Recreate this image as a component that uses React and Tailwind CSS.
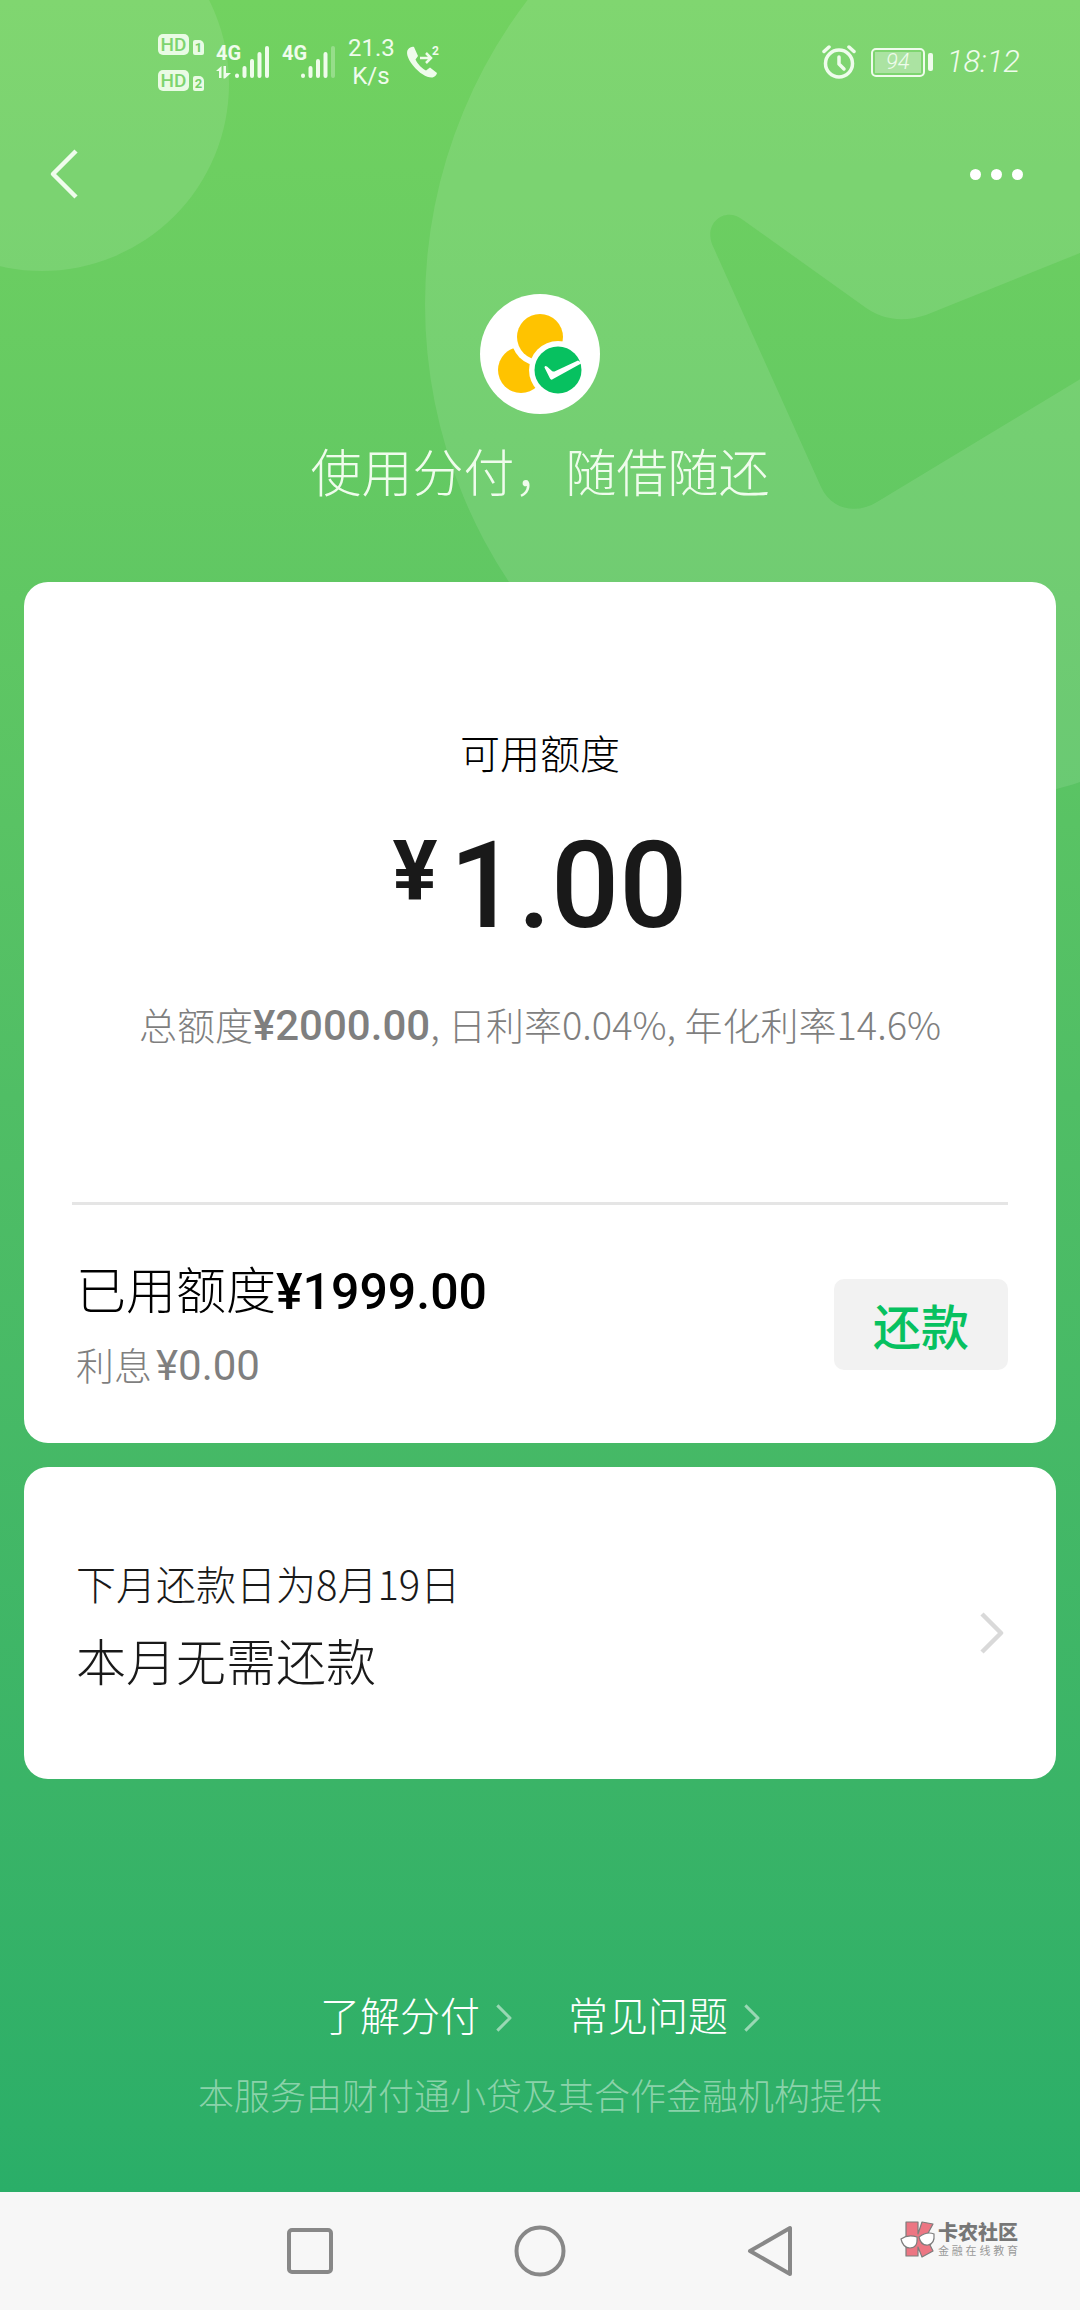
// Credit overview page: available limit, used limit, next repayment.

const HAND = "font-['Noto_Sans_CJK_SC',sans-serif] font-light";
const NUM = "font-['Roboto',sans-serif] font-medium";

const LINKS = ["了解分付", "常见问题"];

function Backdrop() {
  return (
    <svg className="absolute top-0 right-0 w-[1080px] h-[820px]" viewBox="0 0 1080 820" aria-hidden="true">
      <circle cx="42" cy="84" r="187" fill="#fff" fillOpacity="0.1" />
      <path
        fill="#fff"
        fillOpacity="0.1"
        fillRule="evenodd"
        d="M425 304a502 502 0 1 0 1004 0a502 502 0 1 0 -1004 0Z
           M743 220L862 305Q890 327 926 315L1110 241L1110 361L877 502C858 514 832 511 821 487L712 244C704 222 726 206 743 220Z"
      />
    </svg>
  );
}

function HdBadge({ sim }) {
  return (
    <div className="flex items-end gap-1">
      <span className="flex h-[21px] w-[31px] items-center justify-center rounded-[5px] bg-[#e9fbe4] font-['Roboto'] text-[19px] leading-none font-medium text-[#7dd46f]">HD</span>
      <span className="flex h-[15px] w-[11px] items-center justify-center rounded-[2px] rounded-tr-[5px] bg-[#e9fbe4] font-['Roboto'] text-[13px] leading-none font-bold text-[#74ce66]">{sim}</span>
    </div>
  );
}

function Signal({ weak, data }) {
  return (
    <div className="relative h-[34px] w-[54px]">
      <span className="absolute top-0 left-0 font-['Liberation_Sans_Narrow','Roboto',sans-serif] text-[20px] leading-4 font-bold">4G</span>
      <svg className="absolute inset-0" width="54" height="34" viewBox="0 0 54 34" stroke="currentColor" strokeWidth="4" strokeLinecap="round" aria-hidden="true">
        <path d="M21 30.500V31M28.500 23V31M36 16V31M43.500 9V31" />
        <path d="M51 3V31" strokeOpacity={weak ? 0.3 : 1} />
        {data && <path d="M0 26L5.500 21V33H3V26ZM7.500 21H10V28H15L9 33.500H7.500Z" fill="currentColor" stroke="none" />}
      </svg>
    </div>
  );
}

function StatusBar() {
  return (
    <div className="flex h-[124px] items-center justify-between pr-[60px] pl-[158px] text-[#effcec]">
      <div className="flex items-center">
        <div className="flex flex-col gap-[15px]">
          <HdBadge sim="1" />
          <HdBadge sim="2" />
        </div>
        <div className="ml-3 flex gap-3">
          <Signal data />
          <Signal weak />
        </div>
        <div className="ml-3 w-[46px] text-center font-['Roboto'] text-[24px] leading-7">
          <p>21.3</p>
          <p>K/s</p>
        </div>
        <svg className="ml-3" width="34" height="36" viewBox="0 0 34 36" fill="none" aria-hidden="true">
          <path d="M2 5.500C0 8 1 14 7 21.500C13.500 29.500 21 34 26.500 33.500C29 33 30.500 31 31 29L24 23.500L20 26.500C16.500 25 11.500 20 9.500 15.500L12 12L8 3C6 2.500 3.500 3.500 2 5.500Z" fill="currentColor" />
          <path d="M14 14H24M20 9L25 14L20 19" stroke="currentColor" strokeWidth="2.500" />
          <text x="26" y="11" fill="currentColor" className="font-['Roboto'] text-[12px] font-bold">2</text>
        </svg>
      </div>

      <div className="flex items-center">
        <svg width="34" height="34" viewBox="0 0 34 34" fill="none" stroke="currentColor" strokeLinecap="round" aria-hidden="true">
          <circle cx="17" cy="18.500" r="13.500" strokeWidth="3.500" />
          <path d="M17 12V19L22 24" strokeWidth="3.500" strokeLinejoin="round" />
          <path d="M2 6.500L7 2M27 2L32 6.500" strokeWidth="3.500" />
        </svg>
        <div className="ml-[15px] flex items-center gap-[3px]">
          <div className="h-[29px] w-[54px] rounded-[5px] border-2 border-current p-[2px]">
            <div className="flex h-full items-center justify-center bg-white/35 font-['Roboto',sans-serif] text-[22px] leading-none font-light italic">94</div>
          </div>
          <span className="h-[18px] w-[5px] rounded-[2px] bg-current" />
        </div>
        <span className="ml-[14px] font-['Roboto',sans-serif] text-[31px] leading-8 font-light italic">18:12</span>
      </div>
    </div>
  );
}

function Header() {
  return (
    <header className="flex h-[100px] items-center justify-between pr-[54px] pl-[44px] text-white">
      <button aria-label="返回" className="flex h-20 w-12 items-center">
        <svg width="36" height="52" viewBox="0 0 36 52" fill="none" stroke="#effcec" strokeWidth="4.500">
          <path d="M32 3L9 26L32 49" strokeLinejoin="round" />
        </svg>
      </button>
      <button aria-label="更多" className="flex h-20 items-center gap-[10px] px-[3px]">
        <span className="h-[11px] w-[11px] rounded-full bg-white" />
        <span className="h-[11px] w-[11px] rounded-full bg-white" />
        <span className="h-[11px] w-[11px] rounded-full bg-white" />
      </button>
    </header>
  );
}

function Logo() {
  return (
    <svg width="120" height="120" viewBox="0 0 120 120" aria-hidden="true">
      <circle cx="60" cy="60" r="60" fill="#fff" />
      <circle cx="41" cy="76" r="23" fill="#ffc300" />
      <circle cx="60" cy="43" r="29" fill="#fff" />
      <circle cx="60" cy="43" r="23" fill="#ffc300" />
      <circle cx="78" cy="76" r="29" fill="#fff" />
      <circle cx="78" cy="76" r="23.500" fill="#07c160" />
      <path d="M64.500 73.500Q64.500 71 67 72.500L72 77Q73.500 78 75.500 77L98 66.500L102 69L73 85Q71 86.500 70 84.500Z" fill="#fff" />
    </svg>
  );
}

function Chevron({ width, height, className }) {
  return (
    <svg width={width} height={height} viewBox="0 0 24 42" fill="none" stroke="currentColor" strokeWidth="4.500" className={className} aria-hidden="true">
      <path d="M2 2L21 21L2 40" strokeLinejoin="round" />
    </svg>
  );
}

function LimitCard() {
  return (
    <section className="rounded-[24px] bg-white px-12 pt-[134px]">
      <div className="flex flex-col items-center">
        <h2 className={`text-[40px] leading-[72px] text-black ${HAND}`}>可用额度</h2>
        <p className={`mt-[38px] flex items-start text-[#191919] ${NUM}`}>
          <span className="mr-3 pt-1 text-[84px] leading-[84px] font-bold">¥</span>
          <span className="text-[120px] leading-[120px]">1.00</span>
        </p>
        <p className={`mt-12 text-center text-[38px] leading-[60px] whitespace-nowrap text-[#7f7f7f] ${HAND}`}>
          总额度<span className={`text-[42px] leading-none ${NUM}`}>¥2000.00</span>, 日利率0.04%, 年化利率14.6%
        </p>
      </div>

      <div className="mt-[148px] flex items-center justify-between border-t-[3px] border-[#e5e5e5] pt-[42px] pb-[42px]">
        <div className="pl-1">
          <p className={`text-[50px] leading-[80px] text-black ${HAND}`}>
            已用额度<span className={`leading-none ${NUM}`}>¥1999.00</span>
          </p>
          <p className={`text-[38px] leading-[74px] text-[#7f7f7f] ${HAND}`}>
            利息<span className="ml-1 font-['Roboto',sans-serif] text-[42px] leading-none font-normal">¥0.00</span>
          </p>
        </div>
        <button className="rounded-[10px] bg-[#f2f2f2] px-[39px] py-[14px] font-['Noto_Sans_CJK_SC',sans-serif] text-[48px] leading-[63px] font-medium text-[#07c160]">
          还款
        </button>
      </div>
    </section>
  );
}

function RepayCard() {
  return (
    <a href="#repay" className={`mt-6 flex items-center justify-between rounded-[24px] bg-white pt-[80px] pr-[52px] pb-[80px] pl-12 text-[#191919] ${HAND}`}>
      <div className="pl-1">
        <p className="text-[40px] leading-[72px]">下月还款日为8月19日</p>
        <p className="text-[50px] leading-[80px]">本月无需还款</p>
      </div>
      <Chevron width="24" height="42" className="mt-5 text-[#d9d9d9]" />
    </a>
  );
}

function NavBar() {
  return (
    <nav className="relative grid h-[118px] grid-cols-3 items-center justify-items-center bg-[#f7f7f7] px-[18%] text-[#888]">
      <button aria-label="最近任务">
        <svg width="46" height="46" viewBox="0 0 46 46" fill="none" stroke="currentColor" strokeWidth="4">
          <rect x="2" y="2" width="42" height="42" rx="3" />
        </svg>
      </button>
      <button aria-label="主页">
        <svg width="52" height="52" viewBox="0 0 52 52" fill="none" stroke="currentColor" strokeWidth="4">
          <circle cx="26" cy="26" r="23.500" />
        </svg>
      </button>
      <button aria-label="后退">
        <svg width="46" height="52" viewBox="0 0 46 52" fill="none" stroke="currentColor" strokeWidth="4" strokeLinejoin="round">
          <path d="M43 3V49L3 26Z" />
        </svg>
      </button>

      <div className="absolute top-[28px] right-[62px] flex items-center gap-[2px] font-['Noto_Sans_CJK_SC',sans-serif]">
        <svg width="36" height="38" viewBox="0 0 36 38" stroke="#7d7d7d" strokeWidth="1.200" aria-hidden="true">
          <path d="M6 2H18V14L22 2L33 4L26 17L33 31L22 37L18 27V36H6Z" fill="#ec7683" strokeLinejoin="round" />
          <path d="M1 19Q8 14 17 17Q18 28 10 28Q3 28 1 19Z" fill="#fff" />
          <path d="M19 17Q27 11 34 14Q35 24 28 25Q21 26 19 17Z" fill="#fff" />
        </svg>
        <div>
          <p className="text-[20px] leading-[22px] font-black text-[#777]">卡农社区</p>
          <p className="flex justify-between text-[11px] leading-[14px] text-[#999]">
            {["金", "融", "在", "线", "教", "育"].map(c => <span key={c}>{c}</span>)}
          </p>
        </div>
      </div>
    </nav>
  );
}

export default function App() {
  return (
    <div className="flex min-h-screen flex-col">
      <div className="relative flex flex-1 flex-col overflow-hidden bg-linear-to-b from-[#72d260] via-[#50be65] to-[#2aae68]">
        <Backdrop />
        <div className="relative flex flex-1 flex-col">
          <StatusBar />
          <Header />

          <div className="mt-[70px] flex flex-col items-center">
            <Logo />
            <h1 className={`mt-5 text-[51px] leading-[72px] text-[#effcec] ${HAND}`}>使用分付，随借随还</h1>
          </div>

          <main className="mt-[76px] px-6">
            <LimitCard />
            <RepayCard />
          </main>

          <footer className={`mt-auto flex flex-col items-center pb-[74px] ${HAND}`}>
            <div className="flex gap-14">
              {LINKS.map(label => (
                <a key={label} href="#help" className="flex items-center gap-4 text-[40px] leading-[60px] text-white">
                  {label}
                  <Chevron width="16" height="28" className="mt-2 text-white/50" />
                </a>
              ))}
            </div>
            <p className="mt-[26px] text-[36px] leading-[48px] text-white/45">本服务由财付通小贷及其合作金融机构提供</p>
          </footer>
        </div>
      </div>
      <NavBar />
    </div>
  );
}
